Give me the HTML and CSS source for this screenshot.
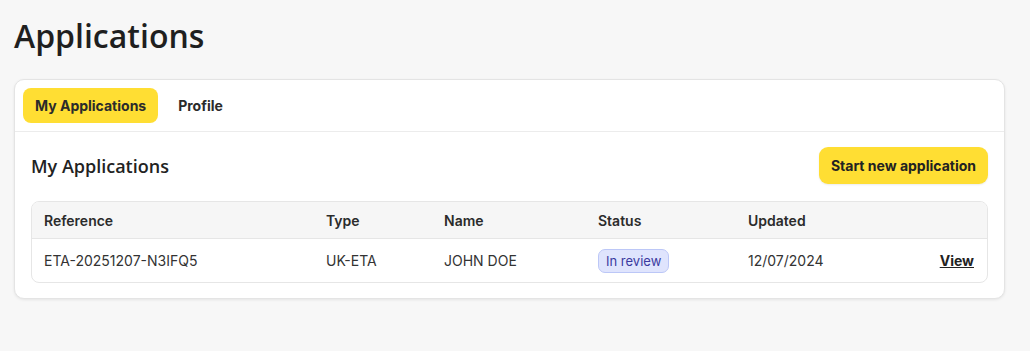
FILE: index.html
```html
<!DOCTYPE html>
<html lang="en">
<head>
    <meta charset="UTF-8">
    <meta name="viewport" content="width=device-width, initial-scale=1.0">
    <title>Applications</title>
    <link rel="stylesheet" href="styles.css">
</head>
<body>
    <main class="page">
        <h1 class="page-title">Applications</h1>

        <section class="card">
            <nav class="tabs">
                <a class="tab active" href="#">My Applications</a>
                <a class="tab" href="#">Profile</a>
            </nav>

            <div class="card-body">
                <div class="section-head">
                    <h2>My Applications</h2>
                    <button class="btn-primary">Start new application</button>
                </div>

                <div class="table">
                    <div class="row head">
                        <div>Reference</div>
                        <div>Type</div>
                        <div>Name</div>
                        <div>Status</div>
                        <div>Updated</div>
                        <div></div>
                    </div>
                    <div class="row">
                        <div>ETA-20251207-N3IFQ5</div>
                        <div>UK-ETA</div>
                        <div>JOHN DOE</div>
                        <div><span class="badge">In review</span></div>
                        <div>12/07/2024</div>
                        <div class="action"><a href="#">View</a></div>
                    </div>
                </div>
            </div>
        </section>
    </main>
</body>
</html>
```

FILE: styles.css
```css
body {
    margin: 0;
    padding: 0;
    background-color: #f7f7f7;
    font-family: Inter, "Liberation Sans", sans-serif;
    color: #222;
}

.page {
    padding: 14px 25px 40px 14px;
}

.page-title {
    font-family: "Open Sans", sans-serif;
    font-size: 32px;
    font-weight: 600;
    margin: 2px 0 23px 0;
    color: #1f1f1f;
    line-height: 40px;
}

.card {
    background-color: #fff;
    border: 1px solid #e4e4e4;
    border-radius: 10px;
    box-shadow: 0 1px 3px rgba(0, 0, 0, 0.08);
}

.tabs {
    display: flex;
    gap: 8px;
    padding: 8px 8px 8px 8px;
    border-bottom: 1px solid #ececec;
}

.tab {
    display: block;
    padding: 9px 12px 9px 12px;
    border-radius: 8px;
    font-size: 14px;
    font-weight: 700;
    color: #2b2b2b;
    text-decoration: none;
}

.tab.active {
    background-color: #ffde33;
}

.card-body {
    padding: 15px 16px 15px 16px;
}

.section-head {
    display: flex;
    justify-content: space-between;
    align-items: center;
    margin-bottom: 17px;
}

.section-head h2 {
    font-family: "Open Sans", sans-serif;
    font-size: 18px;
    font-weight: 600;
    margin: 0;
    color: #222;
}

.btn-primary {
    background-color: #ffde33;
    color: #222;
    border: none;
    border-radius: 9px;
    padding: 10px 12px;
    font-family: Inter, sans-serif;
    font-size: 14px;
    font-weight: 700;
    box-shadow: 0 1px 2px rgba(0, 0, 0, 0.08);
    cursor: pointer;
}

.table {
    border: 1px solid #e6e6e6;
    border-radius: 8px;
    overflow: hidden;
    font-size: 14px;
}

.row {
    display: grid;
    grid-template-columns: 282px 118px 154px 150px 1fr 80px;
    align-items: center;
    padding: 0 13px 0 12px;
    height: 43px;
    color: #333;
}

.row.head {
    height: 36px;
    background-color: #f6f6f6;
    border-bottom: 1px solid #e6e6e6;
    font-weight: 600;
    color: #2b2b2b;
}

.badge {
    display: inline-block;
    padding: 3px 7px;
    font-size: 13px;
    color: #3b3aa0;
    background-color: #dfe4fd;
    border: 1px solid #bcc7f7;
    border-radius: 7px;
}

.action {
    text-align: right;
}

.action a {
    color: #222;
    font-weight: 700;
    text-decoration: underline;
}
```
